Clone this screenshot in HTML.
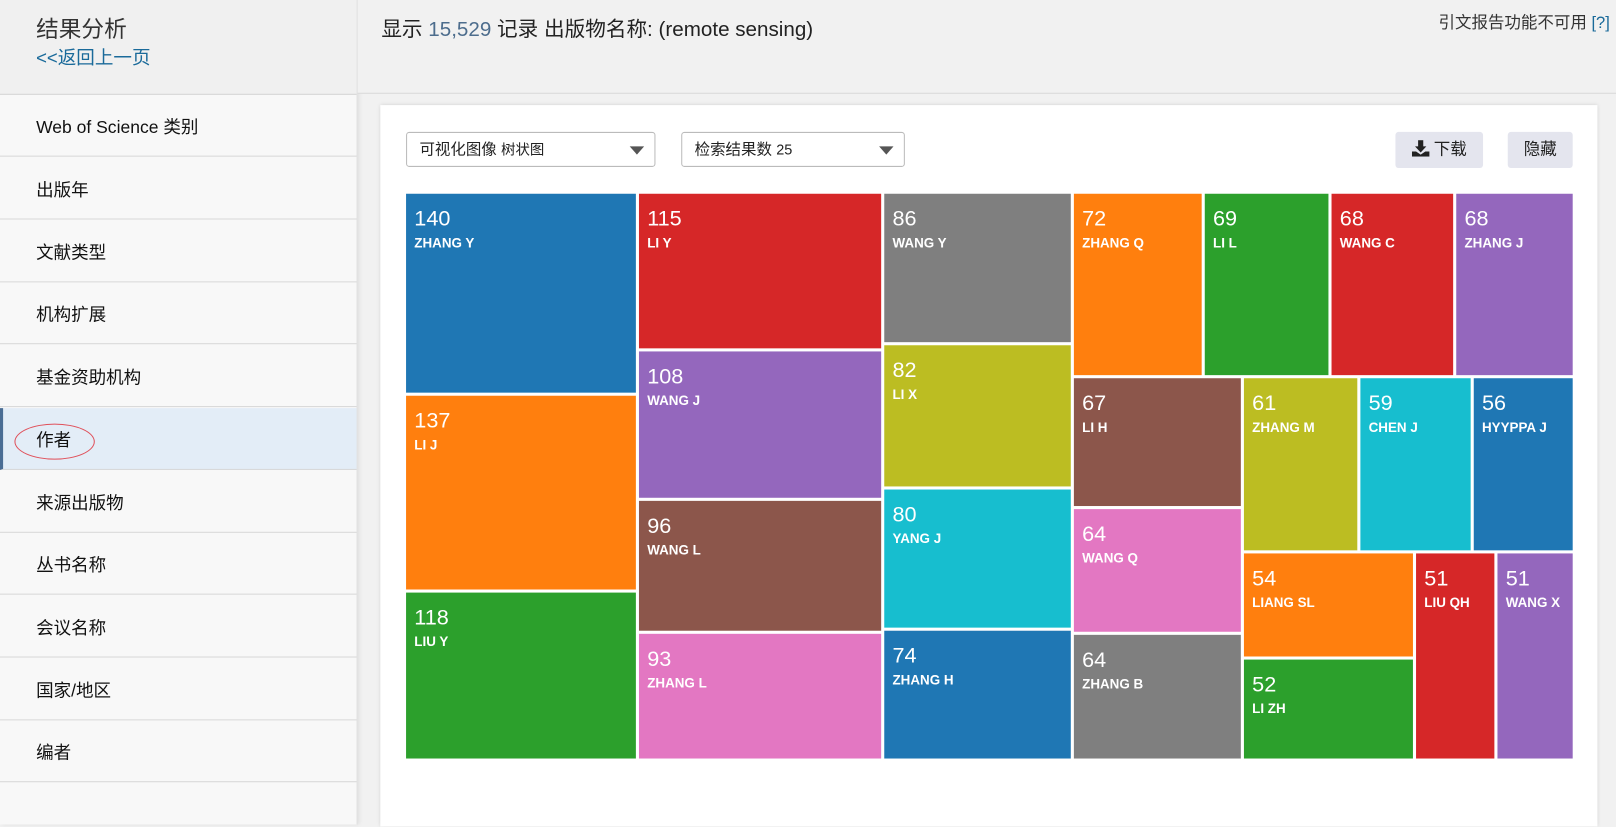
<!DOCTYPE html>
<html><head><meta charset="utf-8"><style>
html,body{margin:0;padding:0;width:1616px;height:796px;overflow:hidden;background:#f1f1f1}
#w{position:absolute;left:0;top:0;width:1568px;height:772px;transform:scale(1.0306);transform-origin:0 0;font-family:"Liberation Sans","Noto Sans CJK SC",sans-serif;color:#222}
.sb{position:absolute;left:0;top:0;width:346px;height:800px;background:#f8f8f8;border-right:1px solid #ddd;box-shadow:2px 0 4px rgba(0,0,0,.08)}
.sbh{position:absolute;left:0;top:0;width:346px;height:91px;background:#f0f0f0;border-bottom:1px solid #d4d4d4}
.it{position:absolute;left:0;width:346px;height:60px;border-bottom:1px solid #d8d8d8;font-size:17px;line-height:64px;padding-left:35px;box-sizing:border-box;color:#111}
.act{background:#e3edf7;border-left:3px solid #4a6d94;padding-left:32px}
.mh{position:absolute;left:347px;top:0;width:1221px;height:90px;border-bottom:1px solid #d8d8d8;background:#f1f1f1}
.panel{position:absolute;left:369px;top:102px;width:1181px;height:700px;background:#fff;box-shadow:0 0 4px rgba(0,0,0,.15)}
.dd{position:absolute;top:26px;height:34px;border:1px solid #bbb;border-radius:3px;box-sizing:border-box;font-size:15px;line-height:32px;padding-left:12px;color:#222}
.dd:after{content:"";position:absolute;right:10px;top:13px;border-left:7px solid transparent;border-right:7px solid transparent;border-top:8px solid #555}
.btn{position:absolute;top:26px;height:35px;background:#e4e5ee;border-radius:3px;font-size:16px;line-height:35px;text-align:center;color:#222}
.t{position:absolute;color:#fff;box-sizing:border-box;padding:12px 0 0 8px;overflow:hidden;white-space:nowrap}
.t b{display:block;font-weight:normal;font-size:21px;line-height:26px}
.t i{display:block;font-style:normal;font-weight:bold;font-size:13px;line-height:20px}
</style></head><body><div id="w">
<div class="sb">
<div class="sbh"><div style="position:absolute;left:35px;top:11px;font-size:22px;color:#333">结果分析</div><div style="position:absolute;left:35px;top:42px;font-size:18px;color:#1a6a9a">&lt;&lt;返回上一页</div></div>
<div class="it" style="top:92px">Web of Science 类别</div>
<div class="it" style="top:153px">出版年</div>
<div class="it" style="top:214px">文献类型</div>
<div class="it" style="top:274px">机构扩展</div>
<div class="it" style="top:335px">基金资助机构</div>
<div class="it act" style="top:396px">作者<div style="position:absolute;left:11px;top:15px;width:76px;height:33px;border:1px solid #e0505a;border-radius:50%"></div></div>
<div class="it" style="top:457px">来源出版物</div>
<div class="it" style="top:517px">丛书名称</div>
<div class="it" style="top:578px">会议名称</div>
<div class="it" style="top:639px">国家/地区</div>
<div class="it" style="top:699px">编者</div>
</div>
<div class="mh"><div style="position:absolute;left:23px;top:12px;font-size:20px;color:#222">显示 <span style="color:#4d6d8d">15,529</span> 记录 出版物名称: (remote sensing)</div>
<div style="position:absolute;right:6px;top:8px;font-size:16px;color:#333">引文报告功能不可用 <span style="color:#1a6a9a">[?]</span></div></div>
<div class="panel">
<div class="dd" style="left:25px;width:242px">可视化图像 <span style="font-size:14px">树状图</span></div>
<div class="dd" style="left:292px;width:217px">检索结果数 <span style="font-size:14px">25</span></div>
<div class="btn" style="left:985px;width:85px"><svg width="17" height="16" viewBox="0 0 17 16" style="vertical-align:-2px"><path d="M6 0h5v6h3l-5.5 6L3 6h3z" fill="#222"/><path d="M0 11h4l4.5 3 4.5-3h4v5H0z" fill="#222"/></svg> 下载</div>
<div class="btn" style="left:1094px;width:63px">隐藏</div>
</div>
<div class="t" style="left:394px;top:188px;width:223px;height:193px;background:#1f77b4"><b>140</b><i>ZHANG Y</i></div>
<div class="t" style="left:394px;top:384px;width:223px;height:188px;background:#ff7f0e"><b>137</b><i>LI J</i></div>
<div class="t" style="left:394px;top:575px;width:223px;height:161px;background:#2ca02c"><b>118</b><i>LIU Y</i></div>
<div class="t" style="left:620px;top:188px;width:235px;height:150px;background:#d62728"><b>115</b><i>LI Y</i></div>
<div class="t" style="left:620px;top:341px;width:235px;height:142px;background:#9467bd"><b>108</b><i>WANG J</i></div>
<div class="t" style="left:620px;top:486px;width:235px;height:126px;background:#8c564b"><b>96</b><i>WANG L</i></div>
<div class="t" style="left:620px;top:615px;width:235px;height:121px;background:#e377c2"><b>93</b><i>ZHANG L</i></div>
<div class="t" style="left:858px;top:188px;width:181px;height:144px;background:#7f7f7f"><b>86</b><i>WANG Y</i></div>
<div class="t" style="left:858px;top:335px;width:181px;height:137px;background:#bcbd22"><b>82</b><i>LI X</i></div>
<div class="t" style="left:858px;top:475px;width:181px;height:134px;background:#17becf"><b>80</b><i>YANG J</i></div>
<div class="t" style="left:858px;top:612px;width:181px;height:124px;background:#1f77b4"><b>74</b><i>ZHANG H</i></div>
<div class="t" style="left:1042px;top:188px;width:124px;height:176px;background:#ff7f0e"><b>72</b><i>ZHANG Q</i></div>
<div class="t" style="left:1169px;top:188px;width:120px;height:176px;background:#2ca02c"><b>69</b><i>LI L</i></div>
<div class="t" style="left:1292px;top:188px;width:118px;height:176px;background:#d62728"><b>68</b><i>WANG C</i></div>
<div class="t" style="left:1413px;top:188px;width:113px;height:176px;background:#9467bd"><b>68</b><i>ZHANG J</i></div>
<div class="t" style="left:1042px;top:367px;width:162px;height:124px;background:#8c564b"><b>67</b><i>LI H</i></div>
<div class="t" style="left:1042px;top:494px;width:162px;height:119px;background:#e377c2"><b>64</b><i>WANG Q</i></div>
<div class="t" style="left:1042px;top:616px;width:162px;height:120px;background:#7f7f7f"><b>64</b><i>ZHANG B</i></div>
<div class="t" style="left:1207px;top:367px;width:110px;height:167px;background:#bcbd22"><b>61</b><i>ZHANG M</i></div>
<div class="t" style="left:1320px;top:367px;width:107px;height:167px;background:#17becf"><b>59</b><i>CHEN J</i></div>
<div class="t" style="left:1430px;top:367px;width:96px;height:167px;background:#1f77b4"><b>56</b><i>HYYPPA J</i></div>
<div class="t" style="left:1207px;top:537px;width:164px;height:100px;background:#ff7f0e"><b>54</b><i>LIANG SL</i></div>
<div class="t" style="left:1207px;top:640px;width:164px;height:96px;background:#2ca02c"><b>52</b><i>LI ZH</i></div>
<div class="t" style="left:1374px;top:537px;width:76px;height:199px;background:#d62728"><b>51</b><i>LIU QH</i></div>
<div class="t" style="left:1453px;top:537px;width:73px;height:199px;background:#9467bd"><b>51</b><i>WANG X</i></div>
</div></body></html>
